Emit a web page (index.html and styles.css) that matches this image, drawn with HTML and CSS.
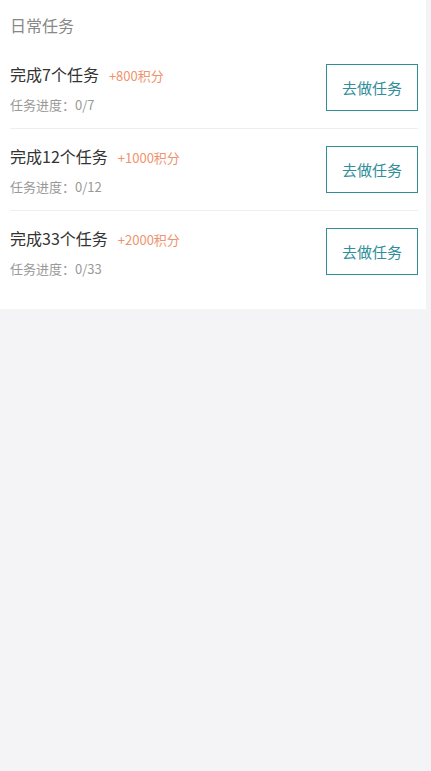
FILE: index.html
```html
<!DOCTYPE html>
<html lang="zh-CN">
  <head>
    <meta charset="UTF-8" />
    <meta name="viewport" content="width=device-width, initial-scale=1.0" />
    <link rel="stylesheet" href="styles.css">
  </head>
  <body>
    <div class="card">
      <h2 class="card-title">日常任务</h2>
      <ul class="task-list">
        <li class="task">
          <div class="task-info">
            <div class="task-name">完成7个任务<span class="task-points">+800积分</span></div>
            <div class="task-progress">任务进度：0/7</div>
          </div>
          <button class="task-btn">去做任务</button>
        </li>
        <li class="task">
          <div class="task-info">
            <div class="task-name">完成12个任务<span class="task-points">+1000积分</span></div>
            <div class="task-progress">任务进度：0/12</div>
          </div>
          <button class="task-btn">去做任务</button>
        </li>
        <li class="task">
          <div class="task-info">
            <div class="task-name">完成33个任务<span class="task-points">+2000积分</span></div>
            <div class="task-progress">任务进度：0/33</div>
          </div>
          <button class="task-btn">去做任务</button>
        </li>
      </ul>
    </div>
  </body>
</html>
```

FILE: styles.css
```css
* {
  margin: 0;
  padding: 0;
  box-sizing: border-box;
}

body {
  font-family: "Noto Sans CJK SC", "Liberation Sans", sans-serif;
  background: #f4f4f6;
  color: #333;
  min-height: 100vh;
}

.card {
  background: #fff;
  margin-right: 5px;
  padding: 0 8px 17px 10px;
}

.card-title {
  font-size: 16px;
  font-weight: normal;
  color: #888;
  height: 47px;
  line-height: 50px;
}

.task-list {
  list-style: none;
}

.task {
  display: flex;
  justify-content: space-between;
  align-items: flex-start;
  padding: 17px 0;
  border-bottom: 1px solid #eee;
}

.task:last-child {
  border-bottom: none;
}

.task-info {
  height: 47px;
}

.task-name {
  display: flex;
  align-items: baseline;
  font-size: 16px;
  line-height: 20px;
  height: 20px;
  color: #333;
}

.task-points {
  font-size: 13px;
  line-height: 16px;
  color: #f0936c;
  margin-left: 10px;
}

.task-progress {
  font-size: 13px;
  line-height: 16px;
  height: 16px;
  color: #999;
  margin-top: 13px;
}

.task-btn {
  width: 92px;
  height: 47px;
  background: #fff;
  border: 1px solid #2f8e98;
  color: #2f8e98;
  font-family: inherit;
  font-size: 15px;
  cursor: pointer;
}
```
